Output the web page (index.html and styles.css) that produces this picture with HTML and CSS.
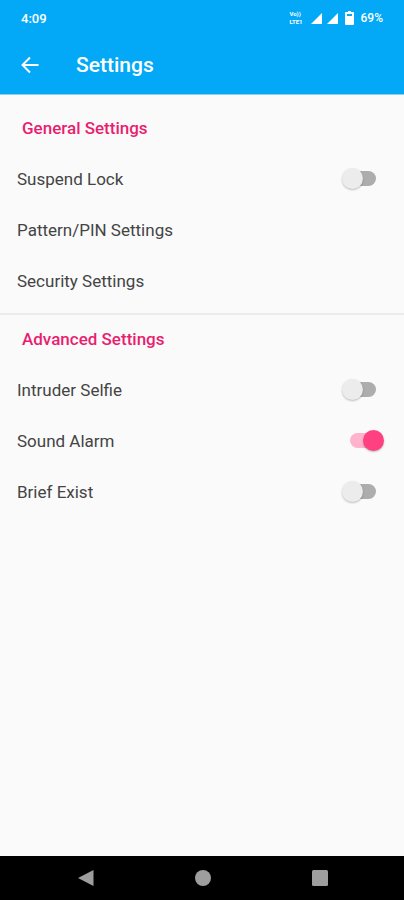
FILE: index.html
```html
<!DOCTYPE html>
<html lang="en">
<head>
<meta charset="utf-8">
<meta name="viewport" content="width=device-width, initial-scale=1">
<title>Settings</title>
<link rel="stylesheet" href="styles.css">
</head>
<body>
<header class="top">
  <div class="status">
    <span class="time">4:09</span>
    <span class="volte"><span>Vo))</span><span>LTE1</span></span>
    <svg class="signal" viewBox="0 0 11 11" aria-hidden="true"><path d="M11 0V11H0Z"/></svg>
    <svg class="signal" viewBox="0 0 11 11" aria-hidden="true"><path d="M11 0V11H0Z"/></svg>
    <svg class="battery" viewBox="0 0 9 14" aria-hidden="true"><path fill-rule="evenodd" d="M3 0H6V1H8Q9 1 9 2V13Q9 14 8 14H1Q0 14 0 13V2Q0 1 1 1H3ZM2 3V5H7V3Z"/></svg>
    <span class="percent">69%</span>
  </div>
  <div class="bar">
    <button class="back" type="button" aria-label="Back">
      <svg viewBox="0 0 18 18" aria-hidden="true"><path d="M17.5 9H2M9 1.5L1.5 9L9 16.5"/></svg>
    </button>
    <h1>Settings</h1>
  </div>
</header>
<main>
  <section class="group">
    <h2>General Settings</h2>
    <label class="row"><span>Suspend Lock</span><input class="switch" type="checkbox" role="switch"></label>
    <button class="row" type="button">Pattern/PIN Settings</button>
    <button class="row" type="button">Security Settings</button>
  </section>
  <section class="group">
    <h2>Advanced Settings</h2>
    <label class="row"><span>Intruder Selfie</span><input class="switch" type="checkbox" role="switch"></label>
    <label class="row"><span>Sound Alarm</span><input class="switch" type="checkbox" role="switch" checked></label>
    <label class="row"><span>Brief Exist</span><input class="switch" type="checkbox" role="switch"></label>
  </section>
</main>
<nav class="system">
  <button type="button" aria-label="Back"><svg viewBox="0 0 18 18" aria-hidden="true"><path d="M16.5 1V17L1 9Z"/></svg></button>
  <button type="button" aria-label="Home"><svg viewBox="0 0 18 18" aria-hidden="true"><circle cx="9" cy="9" r="8"/></svg></button>
  <button type="button" aria-label="Recent apps"><svg viewBox="0 0 18 18" aria-hidden="true"><rect x="1" y="1" width="16" height="16" rx="1.5"/></svg></button>
</nav>
</body>
</html>
```
FILE: styles.css
```css
* { box-sizing: border-box; }

body {
  margin: 0;
  min-height: 100vh;
  display: flex;
  flex-direction: column;
  background: #fafafa;
  color: #444;
  font-family: Roboto, "Liberation Sans", sans-serif;
  font-size: 17px;
}

button {
  margin: 0;
  padding: 0;
  border: 0;
  background: none;
  color: inherit;
  font: inherit;
  text-align: left;
}

svg { display: block; }

.top {
  background: #03a9f6;
  color: #fff;
  border-bottom: 1px solid #8fcdf0;
}

.status {
  display: flex;
  align-items: center;
  height: 36px;
  padding: 0 21px;
  font-size: 12px;
  font-weight: 500;
}

.time { margin-right: auto; font-size: 13px; }

.volte {
  display: flex;
  flex-direction: column;
  margin-right: 8px;
  font-size: 6px;
  font-weight: 700;
  line-height: 8px;
}

.signal {
  width: 11px;
  height: 11px;
  margin-right: 5px;
  fill: #fff;
}

.battery {
  width: 9px;
  height: 14px;
  margin: 0 7px 0 2px;
  fill: #fff;
}

.bar {
  display: flex;
  align-items: center;
  gap: 37px;
  height: 58px;
  padding: 0 21px;
}

.back svg {
  width: 18px;
  height: 18px;
  fill: none;
  stroke: #fff;
  stroke-width: 2;
}

h1 {
  margin: 0;
  font-size: 21px;
  font-weight: 500;
}

main { flex: 1; }

.group { padding: 9px 0 7px; }

.group + .group {
  padding-top: 0;
  border-top: 2px solid #ebebeb;
}

h2 {
  margin: 0;
  padding: 0 22px;
  color: #e91e70;
  font-size: 17px;
  font-weight: 500;
  line-height: 49px;
}

.row {
  display: flex;
  align-items: center;
  justify-content: space-between;
  width: 100%;
  height: 51px;
  padding: 0 20px 0 17px;
}

.switch {
  appearance: none;
  position: relative;
  width: 42px;
  height: 21px;
  margin: 0;
}

.switch::before {
  content: "";
  position: absolute;
  top: 3px;
  left: 8px;
  width: 26px;
  height: 15px;
  border-radius: 8px;
  background: #adadad;
}

.switch::after {
  content: "";
  position: absolute;
  top: 0;
  left: 0;
  width: 21px;
  height: 21px;
  border-radius: 50%;
  background: #ececec;
  box-shadow: 0 1px 2px rgba(0, 0, 0, 0.25);
}

.switch:checked::before { background: #ffb3cd; }

.switch:checked::after {
  left: 21px;
  background: #ff4081;
}

.system {
  display: grid;
  grid-template-columns: repeat(3, 1fr);
  height: 44px;
  padding: 0 26px 0 27px;
  background: #000;
}

.system button {
  display: flex;
  align-items: center;
  justify-content: center;
}

.system svg {
  width: 18px;
  height: 18px;
  fill: #9e9e9e;
}
```
